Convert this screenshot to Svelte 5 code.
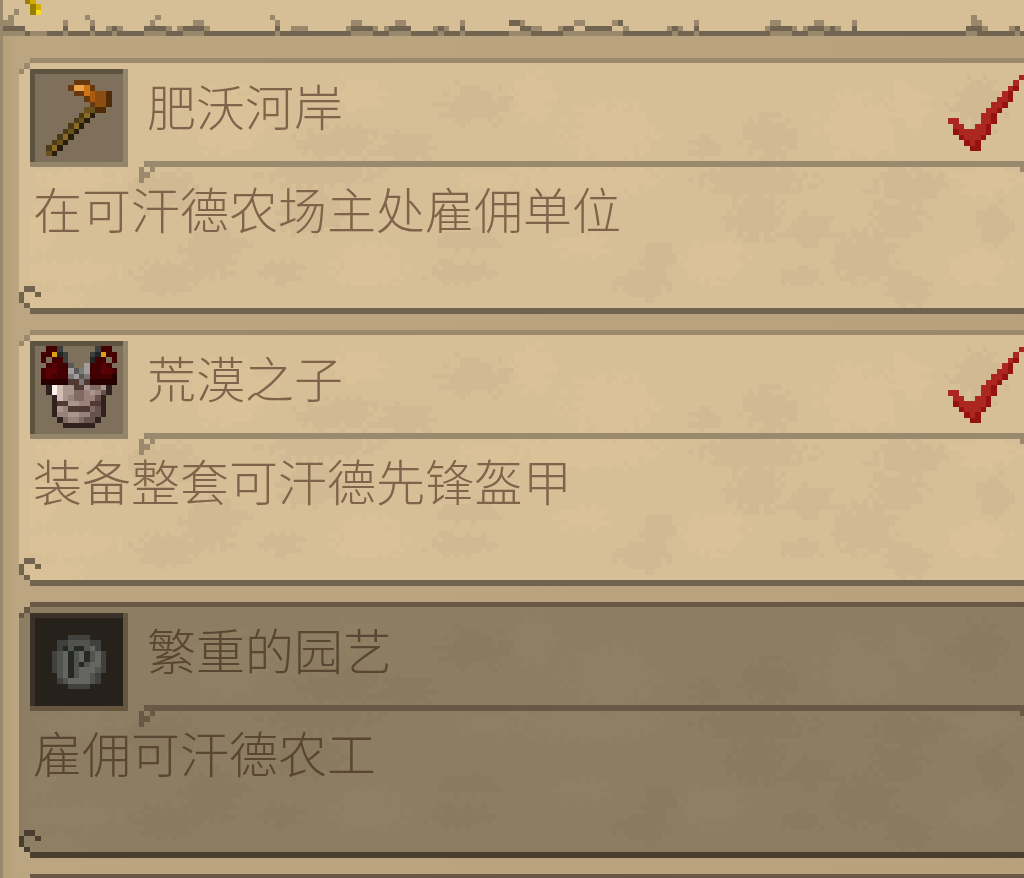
<script lang="ts">
  type Quest = {
    title: string;
    description: string;
    icon: string;
    done: boolean;
    locked: boolean;
  };

  // Size of one texture pixel on screen
  const UNIT = 5.44;

  const quests: Quest[] = [
    { title: '肥沃河岸', description: '在可汗德农场主处雇佣单位', icon: 'hoe', done: true, locked: false },
    { title: '荒漠之子', description: '装备整套可汗德先锋盔甲', icon: 'armor', done: true, locked: false },
    { title: '繁重的园艺', description: '雇佣可汗德农工', icon: 'coin', done: false, locked: true },
  ];

  const palettes: Record<string, Record<string, string>> = {
    hoe: {
      b: '#65390d', l: '#eda04c', o: '#cd7618', m: '#a85b11', n: '#8b4d10',
      d: '#4f2b08', s: '#4b3a16', t: '#8d6a25', w: '#6a501c', k: '#291d0c',
    },
    armor: {
      R: '#420002', r: '#590204', x: '#290002', g: '#3c3d3c', k: '#222523', Y: '#dda013',
      a: '#a09d9b', c: '#7b7977', e: '#5a5856', K: '#30211f', W: '#fff2ec', P: '#d2bdb4',
      p: '#9a8179', q: '#806a64', v: '#aa968c', B: '#513a34', u: '#66534e',
    },
    coin: { d: '#40413e', g: '#52534f', h: '#656661', k: '#242826' },
    check: { r: '#ab2720', d: '#941310' },
    ledge: { D: '#716450', m: '#99886b' },
    spark: { y: '#fbdc25', g: '#d3b000', o: '#958003' },
  };

  const sprites: Record<string, string[]> = {
    hoe: [
      '',
      '.......bbb',
      '......bllob',
      '.......bbomnnd',
      '.........bmnnd',
      '..........bnnd',
      '.........wwdd',
      '........stk',
      '.......swk',
      '......stk',
      '.....swk',
      '....stk',
      '...swk',
      '..stk',
      '..wk',
    ],
    armor: [
      '..RRg......gRR',
      '.RRYkg....gkYRR',
      '.R.RRg....kRR.R',
      '..RrRRe..aRRrR',
      '.RrrRRaecaRRrrR',
      '.RrRRRcaecRRRRx',
      '.xxxxxBBcBxxxxx',
      '..KWPvvBBvqqvK',
      '..KWPvvqqpvpuK',
      '...KPvpqqppuK',
      '...KBBvvppBBK',
      '...KvpBBBBquK',
      '...KppvvppuuK',
      '....KqppquuK',
      '.....KKKKKK',
    ],
    coin: [
      '',
      '',
      '',
      '......dddd',
      '....ddggggdd',
      '....dkgkkghd',
      '...dghkghkghd',
      '...dghkghkghd',
      '...dghkgkghhd',
      '...dghkghhhgd',
      '....ghkghhgd',
      '....dghhhhgd',
      '......dddd',
    ],
    check: [
      '.............r',
      '............r',
      '...........rd',
      '..........rd',
      '.........rrd',
      '........rrd',
      '.......rrd',
      '......rrd',
      'rr....rrd',
      '.rr..rrd',
      '.drrrrrd',
      '..drrrd',
      '...drd',
      '....dd',
    ],
    spark: ['og', '.og', '.oy'],
  };

  // Broken edge under the page header, as [row, column, length, tone]
  const ledge: [number, number, number, string][] = [
    [4, 2, 1, 'm'],
    [3, 1, 1, 'm'], [3, 15, 1, 'm'], [3, 28, 1, 'm'], [3, 49, 1, 'm'], [3, 178, 1, 'm'],
    [2, 0, 2, 'm'], [2, 11, 1, 'm'], [2, 16, 1, 'm'], [2, 27, 1, 'm'], [2, 35, 2, 'm'],
    [2, 50, 1, 'm'], [2, 64, 2, 'm'], [2, 72, 2, 'm'], [2, 84, 1, 'm'], [2, 93, 2, 'D'],
    [2, 95, 1, 'm'], [2, 105, 2, 'm'], [2, 112, 1, 'm'], [2, 113, 1, 'D'], [2, 127, 1, 'm'],
    [2, 141, 2, 'm'], [2, 149, 2, 'm'], [2, 156, 1, 'm'], [2, 178, 2, 'm'],
    [1, 0, 4, 'D'], [1, 11, 1, 'D'], [1, 16, 1, 'D'], [1, 19, 1, 'm'], [1, 20, 1, 'D'],
    [1, 21, 1, 'm'], [1, 26, 4, 'D'], [1, 30, 1, 'm'], [1, 32, 1, 'm'], [1, 33, 4, 'D'],
    [1, 37, 1, 'm'], [1, 50, 1, 'D'], [1, 53, 3, 'm'], [1, 63, 1, 'm'], [1, 64, 4, 'D'],
    [1, 68, 1, 'm'], [1, 70, 1, 'm'], [1, 71, 4, 'D'], [1, 79, 1, 'm'], [1, 80, 1, 'D'],
    [1, 81, 1, 'm'], [1, 84, 1, 'D'], [1, 95, 2, 'D'], [1, 97, 2, 'm'], [1, 102, 1, 'm'],
    [1, 103, 2, 'D'], [1, 107, 5, 'D'], [1, 114, 1, 'm'], [1, 122, 1, 'm'], [1, 123, 1, 'D'],
    [1, 124, 1, 'm'], [1, 127, 1, 'D'], [1, 140, 1, 'm'], [1, 141, 4, 'D'], [1, 145, 1, 'm'],
    [1, 147, 1, 'm'], [1, 148, 3, 'D'], [1, 151, 1, 'm'], [1, 152, 1, 'D'], [1, 153, 1, 'm'],
    [1, 156, 1, 'D'], [1, 177, 3, 'D'], [1, 180, 1, 'm'], [1, 185, 1, 'm'], [1, 186, 1, 'D'],
    [0, 0, 4, 'm'], [0, 5, 3, 'm'], [0, 11, 1, 'm'], [0, 16, 1, 'm'], [0, 20, 1, 'm'],
    [0, 26, 4, 'm'], [0, 33, 4, 'm'], [0, 50, 1, 'm'], [0, 64, 4, 'm'], [0, 71, 4, 'm'],
    [0, 80, 1, 'm'], [0, 84, 1, 'm'], [0, 93, 4, 'm'], [0, 103, 11, 'm'], [0, 123, 1, 'm'],
    [0, 127, 1, 'm'], [0, 141, 4, 'm'], [0, 148, 3, 'm'], [0, 177, 2, 'm'], [0, 186, 1, 'm'],
  ];

  // Stains on the parchment, as [column, row, radius x, radius y]
  type Stain = [number, number, number, number];

  const darkStains: Stain[] = [
    [83, 8, 6, 4], [58, 15, 8, 3], [71, 16, 5, 3], [55, 21, 11, 2], [26, 24, 7, 4],
    [35, 35, 6, 5], [27, 40, 6, 3], [53, 28, 7, 4], [82, 33, 6, 2], [81, 39, 7, 2],
    [48, 39, 4, 2], [137, 14, 5, 4], [126, 16, 3, 2], [135, 22, 11, 3], [135, 29, 6, 4],
    [145, 31, 5, 3], [163, 23, 7, 3], [161, 29, 5, 4], [155, 36, 6, 5], [163, 42, 5, 3],
    [143, 40, 4, 2], [179, 30, 3, 4], [114, 41, 5, 3], [117, 36, 3, 3], [176, 8, 5, 5],
  ];
  const lightStains: Stain[] = [
    [10, 22, 8, 2], [9, 39, 10, 2], [38, 11, 8, 6], [64, 38, 7, 4], [86, 22, 5, 2],
    [6, 44, 6, 2], [62, 6, 5, 3], [94, 7, 4, 5], [108, 13, 8, 5], [103, 22, 14, 3],
    [127, 37, 6, 4], [154, 12, 7, 6], [163, 8, 4, 4], [177, 22, 6, 3], [175, 38, 6, 3],
    [103, 34, 5, 2], [3, 31, 3, 4],
  ];

  /** Turn stains into one path of whole texture pixels with ragged edges. */
  function stainPath(stains: Stain[]) {
    let d = '';
    for (const [cx, cy, rx, ry] of stains) {
      for (let y = Math.max(1, cy - ry - 2); y <= Math.min(45, cy + ry + 2); y++) {
        for (let x = Math.max(2, cx - rx - 2); x <= cx + rx + 2; x++) {
          const noise = Math.abs(Math.sin(x * 12.9898 + y * 78.233) * 43758.5453) % 1;
          const reach = ((x - cx) / rx) ** 2 + ((y - cy) / ry) ** 2;
          if (reach < 0.4 + noise * 1.1) d += `M${x} ${y}h1v1h-1z`;
        }
      }
    }
    return d;
  }

  const darkPath = stainPath(darkStains);
  const lightPath = stainPath(lightStains);
</script>

{#snippet sprite(name: string)}
  {#each sprites[name] as row, y}
    {#each row as cell, x}
      {#if cell !== '.'}
        <rect {x} {y} width="1" height="1" fill={palettes[name][cell]} />
      {/if}
    {/each}
  {/each}
{/snippet}

{#snippet parchment(divided: boolean)}
  <svg class="parchment" aria-hidden="true" shape-rendering="crispEdges">
    <g transform="scale({UNIT})">
      <path class="paper" d="M2 0H999V47H2V46H1V45H0V3H1V2H2z" />
      <path class="light" d={lightPath} />
      <path class="dark" d={darkPath} />
      <path class="rim" d="M2 0H999V1H2zM1 1h1v1h-1zM0 2h1v1h-1z" />
      <path class="base" d="M2 46H999V47H2zM1 45h1v1h-1zM0 43h1v2h-1zM1 42h2v1h-2zM3 43h1v1h-1z" />
      {#if divided}
        <path class="rim" d="M23 19H999V20H23zM22 20h1v3h-1zM23 21h1v1h-1zM24 20h1v1h-1z" />
      {/if}
    </g>
    {#if divided}
      <svg x="100%" overflow="visible">
        <rect class="rim" x="-4" y="109" width="4" height="5" />
      </svg>
    {/if}
  </svg>
{/snippet}

<main class="book">
  <header class="ledge">
    <svg aria-hidden="true" shape-rendering="crispEdges">
      <g transform="scale({UNIT})">
        <g transform="translate(4 -0.2)">{@render sprite('spark')}</g>
        <rect x="0" y="5.7" width="999" height="1" fill={palettes.ledge.D} />
        {#each ledge as [row, x, length, tone]}
          <rect {x} y={5.7 - row} width={length} height="1" fill={palettes.ledge[tone]} />
        {/each}
      </g>
    </svg>
  </header>

  <ul class="quests">
    {#each quests as quest (quest.title)}
      <li class="quest" class:locked={quest.locked}>
        {@render parchment(true)}
        <article class="content">
          <div class="heading">
            <svg class="slot" viewBox="0 0 18 18" aria-hidden="true" shape-rendering="crispEdges">
              <rect class="slot-lit" width="18" height="18" />
              <path class="slot-shade" d="M0 0H17V1H1V17H0z" />
              <rect class="slot-fill" x="1" y="1" width="16" height="16" />
              <g transform="translate(1 1)">{@render sprite(quest.icon)}</g>
            </svg>
            <h2>{quest.title}</h2>
            {#if quest.done}
              <svg class="check" viewBox="0 0 14 14" aria-hidden="true" shape-rendering="crispEdges">
                {@render sprite('check')}
              </svg>
            {/if}
          </div>
          <p>{quest.description}</p>
        </article>
      </li>
    {/each}
    <li class="quest locked" aria-hidden="true">
      {@render parchment(false)}
    </li>
  </ul>
</main>

<style>
  :global(body) {
    background: #b9a37f;
  }

  .book {
    box-sizing: border-box;
    height: 100vh;
    overflow: hidden;
    border-left: 3px solid #99886b;
    background: linear-gradient(90deg, #b7a17d, #bca581 16px, #b8a27e);
    font-family: 'Noto Sans CJK SC', sans-serif;
  }

  .ledge {
    height: 36px;
    background: #d6bf96;
  }

  .ledge svg {
    display: block;
    width: 100%;
    height: 36px;
  }

  .quests {
    display: flex;
    flex-direction: column;
    gap: 16px;
    margin: 0;
    padding: 22px 0 0 16px;
    list-style: none;
  }

  /* Parchment and text share one grid cell, so the art sits behind the words */
  .quest {
    --paper: #d6bf96;
    --light: #dac198;
    --dark: #d1ba93;
    --rim: #9a896c;
    --base: #71644f;
    --ink: #80634a;
    --slot: #7e705a;
    --slot-shade: #5e5341;
    --slot-lit: #95856a;
    display: grid;
    grid-template-rows: 256px;
    flex: none;
  }

  .quest.locked {
    --paper: #8d7d62;
    --light: #8f7f63;
    --dark: #8a7a60;
    --rim: #685845;
    --base: #4a3e30;
    --ink: #5a4632;
    --slot: #27211b;
    --slot-shade: #3c3129;
    --slot-lit: #66563f;
  }

  .parchment,
  .content {
    grid-area: 1 / 1;
    width: 100%;
    height: 100%;
  }

  .paper { fill: var(--paper); }
  .light { fill: var(--light); }
  .dark { fill: var(--dark); }
  .rim { fill: var(--rim); }
  .base { fill: var(--base); }

  .content {
    box-sizing: border-box;
    padding: 11px 0 0 11px;
    color: var(--ink);
  }

  .heading {
    display: flex;
    align-items: flex-start;
    height: 98px;
  }

  .slot {
    flex: none;
    width: 98px;
    height: 98px;
    margin-right: 19px;
  }

  .slot-lit { fill: var(--slot-lit); }
  .slot-shade { fill: var(--slot-shade); }
  .slot-fill { fill: var(--slot); }

  h2,
  p {
    margin: 0;
    font-size: 49px;
    font-weight: 300;
    white-space: nowrap;
  }

  h2 {
    line-height: 72px;
  }

  p {
    padding: 16px 0 0 3px;
    line-height: 50px;
  }

  .check {
    flex: none;
    width: 76px;
    height: 76px;
    margin: 6px 0 0 auto;
  }
</style>
